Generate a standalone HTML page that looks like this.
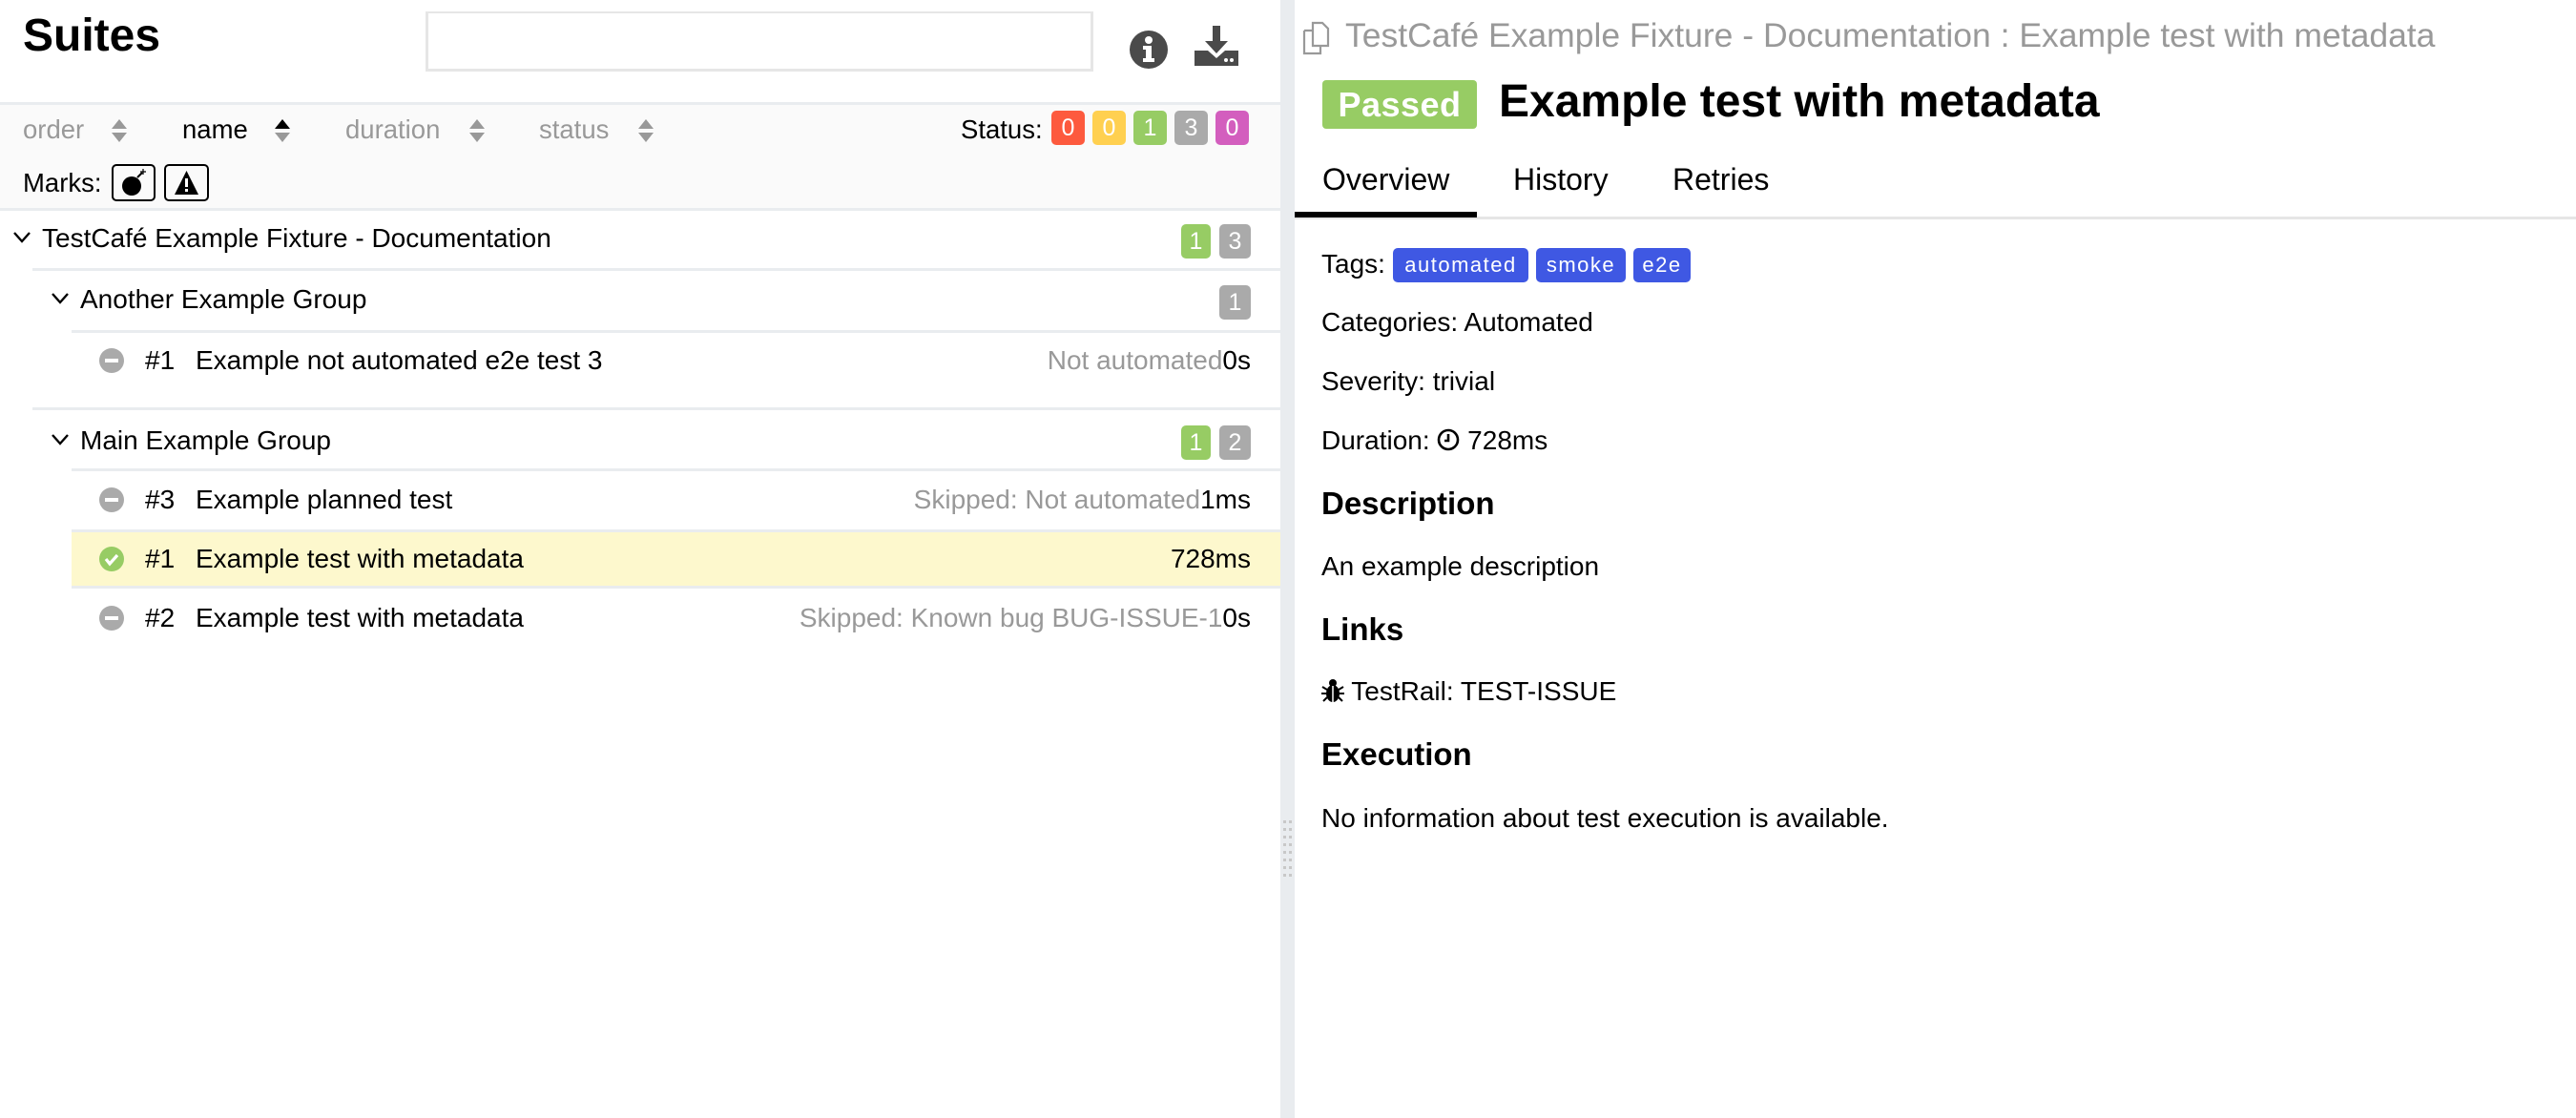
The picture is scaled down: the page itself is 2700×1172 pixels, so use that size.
<!DOCTYPE html>
<html><head><meta charset="utf-8"><style>
*{margin:0;padding:0;box-sizing:border-box}
body{width:2700px;height:1172px;background:#fff;font-family:"Liberation Sans",Arial,sans-serif;color:#000;position:relative;overflow:hidden;font-size:28px}
.a{position:absolute;white-space:nowrap}
.line{position:absolute;height:3px;background:#e9ecef}
.b{position:absolute;height:36px;border-radius:5px;color:#fff;font-size:25px;text-align:center;line-height:36px}
.g{color:#999}
.sort{color:#999;font-size:27.5px}
.arr{position:absolute;width:14px}
.arr:before{content:"";position:absolute;left:0;top:0;border-left:8px solid transparent;border-right:8px solid transparent;border-bottom:10px solid #999}
.arr:after{content:"";position:absolute;left:0;top:14px;border-left:8px solid transparent;border-right:8px solid transparent;border-top:10px solid #999}
.arr.up:before{border-bottom-color:#000}
.tag{position:absolute;top:260px;height:36px;background:#3f58e3;color:#fff;border-radius:5px;font-size:22px;letter-spacing:1.5px;line-height:36px;text-align:center}
.ic{position:absolute;width:26px;height:26px;border-radius:50%;background:#aaa}
.ic:after{content:"";position:absolute;left:6px;top:11px;width:14px;height:4px;background:#fff}
</style></head><body>
<div class="a" style="left:24px;top:10px;font-size:48px;font-weight:bold">Suites</div>
<div class="a" style="left:446px;top:12px;width:700px;height:63px;border:3px solid #e6e6e6;border-top-width:2px"></div>
<svg class="a" style="left:1183px;top:31px" width="42" height="42" viewBox="0 0 42 42"><circle cx="21" cy="21" r="20" fill="#4a4a4a"/><circle cx="21" cy="11" r="4" fill="#fff"/><path d="M15 17h9v13h3v4H15v-4h3v-9h-3z" fill="#fff"/></svg>
<svg class="a" style="left:1252px;top:27px" width="46" height="42" viewBox="0 0 46 42"><path d="M19 0h8v16h8L23 29 11 16h8z" fill="#4a4a4a"/><path d="M0 26h14l9 8 9-8h14v16H0z" fill="#4a4a4a"/><circle cx="33" cy="36" r="2" fill="#fff"/><circle cx="39" cy="36" r="2" fill="#fff"/></svg>
<div class="a" style="left:0;top:108px;width:1342px;height:113px;background:#fafafa"></div>
<div class="line" style="left:0;top:107px;width:1342px"></div>
<div class="line" style="left:0;top:218px;width:1342px"></div>
<div class="a sort" style="left:24px;top:120px">order</div><div class="arr" style="left:117px;top:125px"></div>
<div class="a" style="left:191px;top:120px;font-size:27.5px">name</div><div class="arr up" style="left:288px;top:125px"></div>
<div class="a sort" style="left:362px;top:120px">duration</div><div class="arr" style="left:492px;top:125px"></div>
<div class="a sort" style="left:565px;top:120px">status</div><div class="arr" style="left:669px;top:125px"></div>
<div class="a" style="left:1007px;top:120px;font-size:27.5px">Status:</div>
<div class="b" style="left:1102px;top:116px;width:35px;background:#fd5a3e">0</div>
<div class="b" style="left:1145px;top:116px;width:35px;background:#ffd050">0</div>
<div class="b" style="left:1188px;top:116px;width:35px;background:#97cc64">1</div>
<div class="b" style="left:1231px;top:116px;width:35px;background:#aaa">3</div>
<div class="b" style="left:1274px;top:116px;width:35px;background:#d35ebe">0</div>
<div class="a" style="left:24px;top:176px;font-size:27.5px">Marks:</div>
<div class="a" style="left:117px;top:172px;width:46px;height:39px;border:2px solid #000;border-radius:5px"><svg width="42" height="35" viewBox="0 0 42 35"><circle cx="19" cy="21" r="10" fill="#000"/><path d="M25 12l5-5" stroke="#000" stroke-width="2"/><path d="M31 3v6M28 6h6" stroke="#000" stroke-width="1.2"/></svg></div>
<div class="a" style="left:172px;top:172px;width:47px;height:39px;border:2px solid #000;border-radius:5px"><svg width="43" height="35" viewBox="0 0 43 35"><path d="M21.5 5L34 30H9z" fill="#000"/><rect x="20" y="13" width="3" height="9" fill="#fff"/><rect x="20" y="24" width="3" height="3" fill="#fff"/></svg></div>

<svg class="a" style="left:13px;top:242px" width="20" height="14"><path d="M2 2l8 9 8-9" stroke="#000" stroke-width="2.4" fill="none"/></svg>
<div class="a" style="left:44px;top:234px">TestCafé Example Fixture - Documentation</div>
<div class="b" style="left:1238px;top:235px;width:31px;background:#97cc64">1</div>
<div class="b" style="left:1278px;top:235px;width:33px;background:#aaa">3</div>
<div class="line" style="left:34px;top:281px;width:1308px"></div>
<svg class="a" style="left:53px;top:306px" width="20" height="14"><path d="M2 2l8 9 8-9" stroke="#000" stroke-width="2.4" fill="none"/></svg>
<div class="a" style="left:84px;top:298px">Another Example Group</div>
<div class="b" style="left:1278px;top:299px;width:33px;background:#aaa">1</div>
<div class="line" style="left:75px;top:346px;width:1267px"></div>
<div class="ic" style="left:104px;top:365px"></div>
<div class="a" style="left:152px;top:362px">#1</div><div class="a" style="left:205px;top:362px">Example not automated e2e test 3</div>
<div class="a" style="right:1389px;top:362px"><span class="g">Not automated</span>0s</div>
<div class="line" style="left:34px;top:427px;width:1308px"></div>
<svg class="a" style="left:53px;top:454px" width="20" height="14"><path d="M2 2l8 9 8-9" stroke="#000" stroke-width="2.4" fill="none"/></svg>
<div class="a" style="left:84px;top:446px">Main Example Group</div>
<div class="b" style="left:1238px;top:446px;width:31px;background:#97cc64">1</div>
<div class="b" style="left:1278px;top:446px;width:33px;background:#aaa">2</div>
<div class="line" style="left:75px;top:491px;width:1267px"></div>
<div class="ic" style="left:104px;top:511px"></div>
<div class="a" style="left:152px;top:508px">#3</div><div class="a" style="left:205px;top:508px">Example planned test</div>
<div class="a" style="right:1389px;top:508px"><span class="g">Skipped: Not automated</span>1ms</div>
<div class="a" style="left:75px;top:555px;width:1267px;height:62px;background:#fdf8cd;border-top:3px solid #e9ecef;border-bottom:3px solid #e9ecef"></div>
<svg class="a" style="left:104px;top:573px" width="26" height="26"><circle cx="13" cy="13" r="13" fill="#97cc64"/><path d="M7 13l4 5 8-9" stroke="#fff" stroke-width="3.2" fill="none"/></svg>
<div class="a" style="left:152px;top:570px">#1</div><div class="a" style="left:205px;top:570px">Example test with metadata</div>
<div class="a" style="right:1389px;top:570px">728ms</div>
<div class="ic" style="left:104px;top:635px"></div>
<div class="a" style="left:152px;top:632px">#2</div><div class="a" style="left:205px;top:632px">Example test with metadata</div>
<div class="a" style="right:1389px;top:632px"><span class="g">Skipped: Known bug BUG-ISSUE-1</span>0s</div>

<div class="a" style="left:1342px;top:0;width:15px;height:1172px;background:#e9ecef"></div>
<svg class="a" style="left:1342px;top:858px" width="15" height="64"><g fill="#c8c8c8"><rect x="3" y="2" width="3" height="3"/><rect x="9" y="2" width="3" height="3"/><rect x="3" y="10" width="3" height="3"/><rect x="9" y="10" width="3" height="3"/><rect x="3" y="18" width="3" height="3"/><rect x="9" y="18" width="3" height="3"/><rect x="3" y="26" width="3" height="3"/><rect x="9" y="26" width="3" height="3"/><rect x="3" y="34" width="3" height="3"/><rect x="9" y="34" width="3" height="3"/><rect x="3" y="42" width="3" height="3"/><rect x="9" y="42" width="3" height="3"/><rect x="3" y="50" width="3" height="3"/><rect x="9" y="50" width="3" height="3"/><rect x="3" y="58" width="3" height="3"/><rect x="9" y="58" width="3" height="3"/></g></svg>

<svg class="a" style="left:1364px;top:22px" width="36" height="36" viewBox="0 0 36 36"><path d="M12 2h10l6 6v18H12z M3 10h9 M3 10v24h17v-8" stroke="#999" stroke-width="2.2" fill="none"/></svg>
<div class="a g" style="left:1410px;top:17px;font-size:35.5px">TestCafé Example Fixture - Documentation : Example test with metadata</div>
<div class="a" style="left:1386px;top:84px;width:162px;height:51px;background:#97cc64;border-radius:4px;color:#fff;font-weight:bold;font-size:36px;line-height:51px;text-align:center;letter-spacing:0.5px">Passed</div>
<div class="a" style="left:1571px;top:79px;font-size:48px;font-weight:bold">Example test with metadata</div>
<div class="a" style="left:1386px;top:170px;font-size:32px">Overview</div>
<div class="a" style="left:1586px;top:170px;font-size:32px">History</div>
<div class="a" style="left:1753px;top:170px;font-size:32px">Retries</div>
<div class="a" style="left:1357px;top:227px;width:1343px;height:3px;background:#e6e6e6"></div>
<div class="a" style="left:1357px;top:222px;width:191px;height:6px;background:#000"></div>
<div class="a" style="left:1385px;top:261px">Tags:</div>
<div class="tag" style="left:1460px;width:142px">automated</div>
<div class="tag" style="left:1610px;width:94px">smoke</div>
<div class="tag" style="left:1712px;width:60px">e2e</div>
<div class="a" style="left:1385px;top:322px">Categories: Automated</div>
<div class="a" style="left:1385px;top:384px">Severity: trivial</div>
<div class="a" style="left:1385px;top:446px">Duration: <svg width="24" height="24" style="vertical-align:-2px" viewBox="0 0 24 24"><circle cx="12" cy="12" r="10" stroke="#000" stroke-width="2.6" fill="none"/><path d="M12 6v7H8" stroke="#000" stroke-width="2.6" fill="none"/></svg> 728ms</div>
<div class="a" style="left:1385px;top:509px;font-size:33px;font-weight:bold">Description</div>
<div class="a" style="left:1385px;top:578px">An example description</div>
<div class="a" style="left:1385px;top:641px;font-size:33px;font-weight:bold">Links</div>
<div class="a" style="left:1385px;top:709px"><svg width="24" height="26" style="vertical-align:-3px" viewBox="0 0 24 26"><ellipse cx="12" cy="16" rx="7" ry="9" fill="#000"/><circle cx="12" cy="5" r="4" fill="#000"/><path d="M1 9l5 3M23 9l-5 3M0 16h5M24 16h-5M2 24l4-4M22 24l-4-4" stroke="#000" stroke-width="2"/><path d="M12 8v17" stroke="#fff" stroke-width="1.5"/></svg> TestRail: TEST-ISSUE</div>
<div class="a" style="left:1385px;top:772px;font-size:33px;font-weight:bold">Execution</div>
<div class="a" style="left:1385px;top:842px">No information about test execution is available.</div>
</body></html>
